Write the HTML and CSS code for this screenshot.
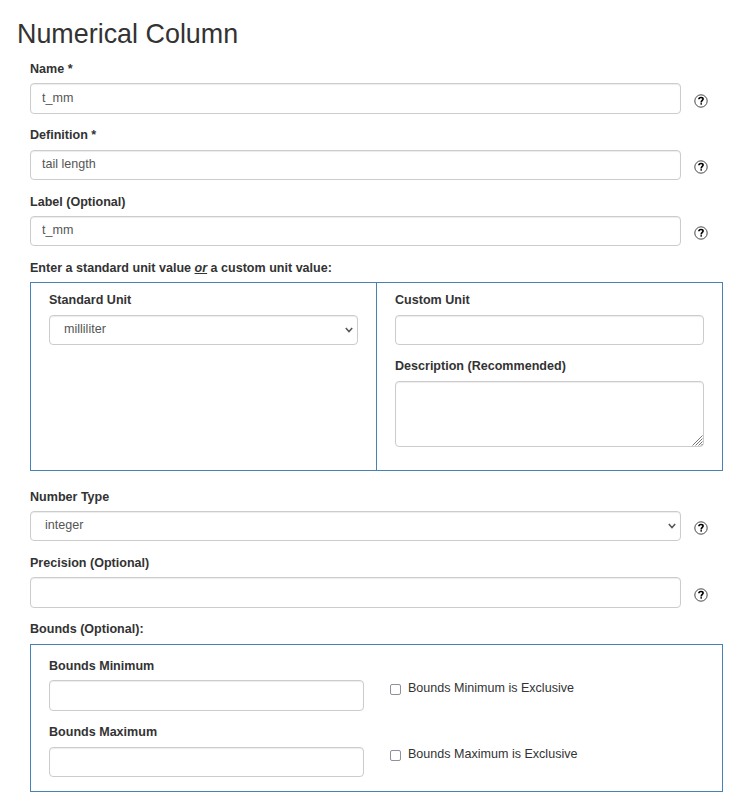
FILE: index.html
```html
<!DOCTYPE html>
<html lang="en">
<head>
<meta charset="utf-8">
<title>Numerical Column</title>
<link rel="stylesheet" href="styles.css">
</head>
<body>
<svg class="defs" width="0" height="0" aria-hidden="true">
  <symbol id="help" viewBox="0 0 14 14">
    <circle cx="7" cy="7" r="6.2" fill="none" stroke="#333" stroke-width=".9"/>
    <path d="M4.9 5.3C4.9 3.9 5.8 3.5 7 3.5s2.1.5 2.1 1.6c0 1.4-1.9 1.4-1.9 3.3" fill="none" stroke="#000" stroke-width="1.6"/>
    <rect x="6.4" y="9.2" width="1.6" height="1.4"/>
  </symbol>
  <symbol id="chevron" viewBox="0 0 8 6">
    <path d="M.8 1 4 4.6 7.2 1" fill="none" stroke="#555" stroke-width="1.5"/>
  </symbol>
</svg>
<form class="page">
  <h1>Numerical Column</h1>
  <div class="content">
    <div class="row">
      <div class="field"><label for="name">Name *</label><input class="control tall" id="name" value="t_mm"></div>
      <svg class="help"><use href="#help"/></svg>
    </div>
    <div class="row">
      <div class="field raised"><label for="def">Definition *</label><input class="control" id="def" value="tail length"></div>
      <svg class="help"><use href="#help"/></svg>
    </div>
    <div class="row">
      <div class="field"><label for="lab">Label (Optional)</label><input class="control" id="lab" value="t_mm"></div>
      <svg class="help"><use href="#help"/></svg>
    </div>
    <div class="caption">Enter a standard unit value <em>or</em> a custom unit value:</div>
    <div class="panel units">
      <div class="half">
        <div class="field raised"><label for="std">Standard Unit</label>
          <div class="select"><select class="control" id="std"><option>milliliter</option></select><svg class="chevron"><use href="#chevron"/></svg></div>
        </div>
      </div>
      <div class="half divided">
        <div class="field raised"><label for="cust">Custom Unit</label><input class="control" id="cust"></div>
        <div class="field raised"><label for="desc">Description (Recommended)</label>
          <div class="area"><textarea class="control" id="desc"></textarea>
            <svg class="grip" viewBox="0 0 11 11"><path d="M.5 10.5l10-10M3.5 10.5l7-7M6.5 10.5l4-4M9 10.5l1.5-1.5" stroke="#777" stroke-width="1" fill="none"/></svg>
          </div>
        </div>
      </div>
    </div>
    <div class="row">
      <div class="field"><label for="type">Number Type</label>
        <div class="select"><select class="control" id="type"><option>integer</option></select><svg class="chevron"><use href="#chevron"/></svg></div>
      </div>
      <svg class="help"><use href="#help"/></svg>
    </div>
    <div class="row precision">
      <div class="field"><label for="prec">Precision (Optional)</label><input class="control tall" id="prec"></div>
      <svg class="help"><use href="#help"/></svg>
    </div>
    <div class="caption last">Bounds (Optional):</div>
    <div class="panel bounds">
      <div class="bound">
        <div class="field"><label for="min">Bounds Minimum</label><input class="control tall" id="min"></div>
        <label class="check"><input type="checkbox"><span>Bounds Minimum is Exclusive</span></label>
      </div>
      <div class="bound">
        <div class="field raised"><label for="max">Bounds Maximum</label><input class="control" id="max"></div>
        <label class="check"><input type="checkbox"><span>Bounds Maximum is Exclusive</span></label>
      </div>
    </div>
  </div>
</form>
</body>
</html>
```

FILE: styles.css
```css
* { box-sizing: border-box; }
body {
  margin: 0;
  background: #fff;
  color: #333;
  font: 12.55px/18px "Liberation Sans", Arial, sans-serif;
}
.defs { position: absolute; }
.page { padding: 18px 20px 10px 17px; }
h1 { margin: 0 0 10px; font-size: 26.9px; font-weight: 400; line-height: 32px; }
.content { margin-left: 13px; }
.row { display: flex; height: 66px; }
.row:first-child { height: 67px; }
.row .field { width: 651px; }
.row .help { margin: 33px 0 0 13px; }
.row:first-child .help, .precision .help { margin-top: 34px; }
.field > label { display: block; height: 23px; font-weight: 700; }
.raised > label { line-height: 16px; }
.control {
  display: block;
  width: 100%;
  height: 30px;
  margin: 0;
  padding: 0 11px 2px;
  border: 1px solid #ccc;
  border-radius: 4px;
  background: #fff;
  box-shadow: inset 0 1px 1px rgba(0, 0, 0, .075);
  color: #555;
  font: inherit;
  appearance: none;
}
.tall { height: 31px; }
select.control { padding: 0 14px 3px; }
textarea.control { height: 66px; resize: none; }
.help { width: 14px; height: 14px; flex: none; }
.select, .area { position: relative; }
.chevron { position: absolute; right: 5px; top: 12px; width: 8px; height: 6px; }
.grip { position: absolute; right: 1px; bottom: 1px; width: 11px; height: 11px; }
.caption { height: 23px; font-weight: 700; }
.caption.last { height: 24px; }
.caption em { text-decoration: underline; }
.panel { width: 693px; border: 1px solid #4682b4; }
.units { display: flex; height: 189px; margin-bottom: 17px; }
.half { width: 345px; padding: 9px 18px 0; }
.half .field { height: 66px; }
.divided { width: 346px; border-left: 1px solid #4682b4; }
.bounds { height: 148px; padding: 12px 18px 0; }
.bound { display: flex; height: 67px; }
.bound .field { width: 315px; }
.check { display: flex; margin: 22px 0 0 26px; }
.bound:last-child .check { margin-top: 21px; }
.check input {
  width: 11px;
  height: 11px;
  margin: 5px 7px 0 0;
  border: 1px solid #8f8f9d;
  border-radius: 2px;
  appearance: none;
}
```
